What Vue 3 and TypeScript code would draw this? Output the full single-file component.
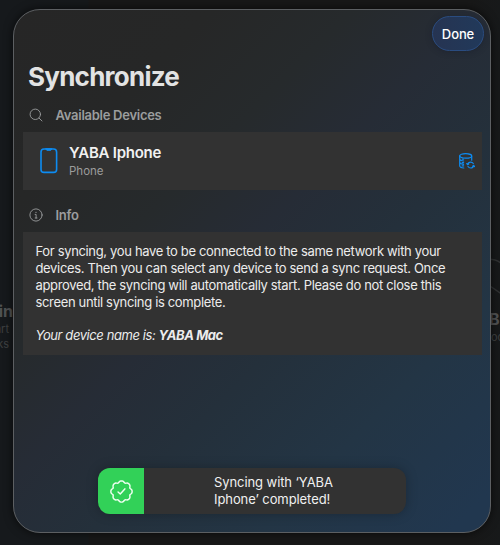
<script setup lang="ts">
interface Device {
  name: string
  kind: string
}

const devices: Device[] = [{ name: 'YABA Iphone', kind: 'Phone' }]
const deviceName = 'YABA Mac'

// Outline of the eight-lobed success seal, centred in a 24x24 box.
function sealPath(): string {
  const points: string[] = []
  for (let i = 0; i < 96; i++) {
    const angle = (i / 96) * Math.PI * 2
    const radius = 9.6 + 0.75 * Math.cos(8 * angle) - 0.15 * Math.cos(16 * angle)
    const x = 12 + radius * Math.sin(angle)
    const y = 12 - radius * Math.cos(angle)
    points.push(`${x.toFixed(2)} ${y.toFixed(2)}`)
  }
  return `M${points.join('L')}Z`
}

const seal = sealPath()
</script>

<template>
  <main class="window">
    <aside class="behind behind-left">
      <strong>in</strong>
      <span>art</span>
      <span>ks</span>
    </aside>
    <aside class="behind behind-right">
      <svg class="glyph" viewBox="0 0 12 36"><path d="M0 1.2C5 1 9 2 12 4.5M2 28 12 35" /></svg>
      <strong>B</strong>
      <span>oo</span>
    </aside>

    <section class="sheet">
      <header class="bar">
        <button class="done">Done</button>
      </header>
      <h1>Synchronize</h1>

      <h2 class="devices-title">
        <svg class="icon" viewBox="0 0 14 14">
          <circle cx="6.3" cy="6.3" r="5.2" />
          <path d="M10.1 10.1 13 13" />
        </svg>
        <span>Available Devices</span>
      </h2>
      <div v-for="device in devices" :key="device.name" class="device">
        <svg class="phone" viewBox="0 0 18 26">
          <rect x="1" y="1" width="15.6" height="23.4" rx="3" />
          <path class="notch" d="M5.8 1 6.8 2.3H10.8L11.8 1Z" />
        </svg>
        <div class="names">
          <strong>{{ device.name }}</strong>
          <span>{{ device.kind }}</span>
        </div>
        <svg class="sync" viewBox="0 0 16 16">
          <ellipse cx="6.7" cy="2.9" rx="6" ry="2.2" />
          <path d="M.7 2.9V12.7C.7 13.9 2.5 14.8 4.8 15M12.7 2.9V7.2M.7 6.2C1.2 7.2 2.6 7.8 4.6 8M.7 9.5C1.2 10.5 2.6 11.1 4.6 11.3M3.2 6.1H4.6M3.2 9.6H4.6M3.2 12.9H4.6" />
          <path d="M8.6 11.5C9 9.9 10.2 9.1 11.7 9.1C12.8 9.1 13.7 9.6 14.3 10.5M14.7 12.6C14.3 14.1 13.1 15 11.7 15C10.5 15 9.6 14.4 9 13.5M7.8 10.6 8.6 11.7 9.8 11M13.6 13.2 14.7 12.4 15.5 13.6" />
        </svg>
      </div>

      <h2 class="info-title">
        <svg class="icon" viewBox="0 0 14 14">
          <circle cx="7" cy="7" r="6.1" />
          <path d="M6.1 6.4H7.1V10M6.2 10H8" />
          <circle class="dot" cx="7" cy="4.3" r=".65" />
        </svg>
        <span>Info</span>
      </h2>
      <div class="info">
        <p>
          For syncing, you have to be connected to the same network with your
          devices. Then you can select any device to send a sync request. Once
          approved, the syncing will automatically start. Please do not close this
          screen until syncing is complete.
        </p>
        <p class="own">Your device name is: <b>{{ deviceName }}</b></p>
      </div>

      <div class="toast">
        <div class="badge">
          <svg viewBox="0 0 24 24">
            <path :d="seal" />
            <path d="M8.7 12.5 10.8 14.4 15.2 9.5" />
          </svg>
        </div>
        <p>Syncing with ‘YABA<br />Iphone’ completed!</p>
      </div>
    </section>
  </main>
</template>

<style>
body {
  margin: 0;
}
</style>

<style scoped>
.window {
  position: relative;
  box-sizing: border-box;
  width: 500px;
  height: 545px;
  padding: 9px 9px 12px 13px;
  overflow: hidden;
  background: linear-gradient(90deg, #16191c 0, #16191b 88px, #181818 89px, #181818 470px, #17191a 500px);
  font-family: Inter, "Liberation Sans", sans-serif;
}

svg {
  fill: none;
  stroke: currentColor;
  stroke-linecap: round;
  stroke-linejoin: round;
}

.behind {
  position: absolute;
  display: flex;
  flex-direction: column;
  color: #3e4041;
  font-size: 11px;
  line-height: 15px;
}

.behind strong {
  color: #505253;
  font-size: 16px;
  line-height: 20px;
}

.behind-left {
  top: 301px;
  right: 487px;
  align-items: flex-end;
}

.behind-left strong {
  margin-bottom: 1px;
}

.behind-left span {
  margin-right: 4px;
}

.behind-right {
  top: 258px;
  left: 488px;
}

.behind-right strong {
  margin: 15px 0 1px 1px;
  line-height: 20px;
}

.behind-right span {
  margin-left: 3px;
}

.glyph {
  width: 12px;
  height: 36px;
  color: #303233;
  stroke-width: 1.5;
}

.sheet {
  position: relative;
  display: flex;
  flex-direction: column;
  box-sizing: border-box;
  height: 524px;
  padding: 0 9px 18px;
  border: 1px solid #5c5f62;
  border-radius: 27px;
  background: linear-gradient(135deg, #262626 0%, #262727 20%, #262a2c 34%, #262c36 47%, #24303b 60%, #233545 77%, #21374f 96%);
  box-shadow: 0 0 10px rgba(0, 0, 0, 0.65);
}

.bar {
  display: flex;
  justify-content: flex-end;
  height: 49px;
  padding-top: 6px;
  box-sizing: border-box;
  margin-right: -3px;
}

.done {
  width: 52px;
  height: 35px;
  padding: 0;
  border: 1px solid #2a4c80;
  border-radius: 18px;
  background: linear-gradient(90deg, #263452, #21395a);
  box-shadow: 0 1px 6px rgba(20, 25, 40, 0.4);
  color: #fff;
  font: 500 13px Inter, sans-serif;
  letter-spacing: -0.1px;
}

h1 {
  margin: 0 0 0 5px;
  color: #e2e3e3;
  font-size: 26px;
  font-weight: 700;
  line-height: 36px;
  letter-spacing: -0.75px;
}

h2 {
  display: flex;
  align-items: center;
  gap: 12.5px;
  margin: 0;
  padding-left: 6px;
  color: #9b9d9e;
  font-size: 13px;
  font-weight: 600;
  line-height: 16px;
  letter-spacing: -0.27px;
}

.icon {
  width: 14px;
  height: 14px;
  stroke-width: 0.9;
}

.dot {
  fill: currentColor;
  stroke: none;
}

.devices-title {
  margin: 12px 0 9px;
}

.device {
  display: flex;
  align-items: center;
  height: 58px;
  margin-right: -0.5px;
  padding: 0 7px 0 17px;
  background: #323232;
}

.phone {
  width: 18px;
  height: 26px;
  color: #0d8cf2;
  stroke-width: 1.6;
}

.notch {
  fill: currentColor;
  stroke-width: 1;
}

.names {
  display: flex;
  flex: 1;
  flex-direction: column;
  margin-left: 11px;
}

.names strong {
  color: #f1f1f1;
  font-size: 15px;
  font-weight: 600;
  line-height: 20px;
  letter-spacing: -0.25px;
}

.names span {
  color: #9c9c9c;
  font-size: 11.5px;
  line-height: 17px;
}

.sync {
  width: 16px;
  height: 16px;
  color: #0d8cf2;
  stroke-width: 1.2;
}

.info-title {
  margin: 17px 0 9px;
}

.info {
  box-sizing: border-box;
  height: 123px;
  margin-right: -0.5px;
  padding: 11px 24px 0 12.5px;
  background: #323232;
  color: #ececec;
  font-size: 13px;
  line-height: 17px;
  letter-spacing: -0.34px;
}

.info p {
  margin: 0;
}

.info .own {
  margin-top: 16px;
  font-style: italic;
  letter-spacing: -0.41px;
}

.toast {
  display: flex;
  width: 308px;
  height: 46px;
  margin: auto auto 0 75px;
  overflow: hidden;
  border-radius: 12px;
  background: #323232;
  box-shadow: 0 0 12px rgba(0, 0, 0, 0.25);
}

.badge {
  display: flex;
  align-items: center;
  justify-content: center;
  width: 46px;
  background: #32d158;
  color: #f0fff2;
}

.badge svg {
  width: 25px;
  height: 25px;
  stroke-width: 1.4;
}

.toast p {
  margin: 6px 0 0 70px;
  color: #f0f0f0;
  font-size: 13px;
  line-height: 17px;
  letter-spacing: -0.08px;
}
</style>
